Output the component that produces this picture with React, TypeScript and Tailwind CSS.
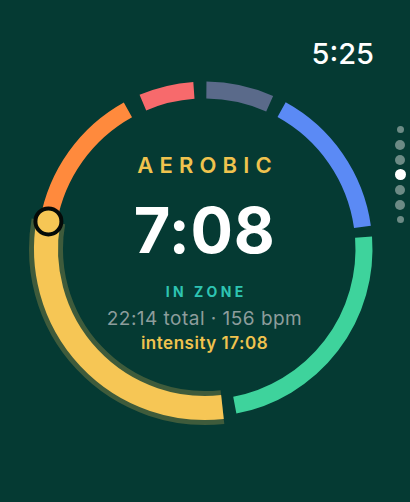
const C = 180;
const R = 159;

function pt(a: number) {
  const r = (a * Math.PI) / 180;
  return [C + R * Math.sin(r), C - R * Math.cos(r)];
}

function arc(a0: number, a1: number) {
  const [x0, y0] = pt(a0);
  const [x1, y1] = pt(a1);
  const large = a1 - a0 > 180 ? 1 : 0;
  return `M ${x0} ${y0} A ${R} ${R} 0 ${large} 1 ${x1} ${y1}`;
}

const segments = [
  { from: -23, to: -4, color: '#f76a6c' },
  { from: 0.5, to: 24, color: '#5a6a8a' },
  { from: 28.8, to: 82, color: '#5b8af5' },
  { from: 85.7, to: 169.2, color: '#3ed39c' },
  { from: 280, to: 331, color: '#ff8a3d' },
];

const dots = [7, 10, 10, 11, 10, 10, 7];

export default function App() {
  const [kx, ky] = pt(280);

  return (
    <div
      className="relative w-[410px] h-[502px] overflow-hidden bg-[#053a33] text-white"
      style={{ fontFamily: 'Inter, "Noto Sans", sans-serif' }}
    >
      {/* status bar */}
      <div className="flex justify-end h-[69px] pt-[39px] pr-[36px]">
        <span className="text-[29px] leading-[29px] font-medium">5:25</span>
      </div>

      {/* ring */}
      <div className="relative ml-[24.5px] w-[360px] h-[360px]">
        <svg className="absolute inset-0" width="360" height="360" viewBox="0 0 360 360">
          {segments.map((s, i) => (
            <path key={i} d={arc(s.from, s.to)} fill="none" stroke={s.color} strokeWidth={17} />
          ))}
          <path d={arc(173.7, 280)} fill="none" stroke="#3f5b3b" strokeWidth={34} />
          <path d={arc(173.7, 280)} fill="none" stroke="#f6c655" strokeWidth={24} />
          <circle cx={kx} cy={ky} r={13} fill="#f6c655" stroke="#050a08" strokeWidth={4} />
        </svg>

        <div className="relative flex flex-col items-center pt-[85px]">
          <div className="text-[22px] leading-[22px] font-semibold tracking-[0.28em] pl-[0.28em] text-[#f0c34e]">
            AEROBIC
          </div>
          <div className="mt-[22.5px] text-[63px] leading-[63px] font-bold tracking-[0.01em]">7:08</div>
          <div className="mt-[23.5px] text-[14px] leading-[14px] font-bold tracking-[0.25em] pl-[0.25em] text-[#2ec4b2]">
            IN ZONE
          </div>
          <div className="mt-[10.4px] text-[19px] leading-[19px] tracking-[0.025em] text-[#8d9d9c]">
            22:14 total · 156 bpm
          </div>
          <div className="mt-[6.3px] text-[17px] leading-[17px] font-semibold tracking-[0.03em] text-[#f0c34e]">
            intensity 17:08
          </div>
        </div>
      </div>

      {/* page indicator */}
      <div className="absolute left-[392.5px] top-[122px] w-[15px] flex flex-col">
        {dots.map((d, i) => (
          <div key={i} className="h-[15px] flex items-center justify-center">
            <div
              className={`rounded-full ${i === 3 ? 'bg-white' : 'bg-[#6c8a85]'}`}
              style={{ width: d, height: d }}
            />
          </div>
        ))}
      </div>
    </div>
  );
}
